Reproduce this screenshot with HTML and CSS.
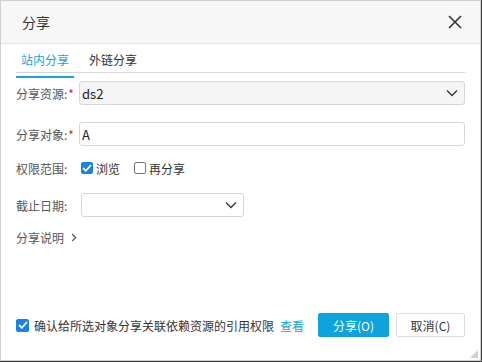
FILE: index.html
```html
<!DOCTYPE html>
<html lang="zh">
<head>
<meta charset="utf-8">
<link rel="stylesheet" href="styles.css">
</head>
<body>
<div class="dialog">
  <div class="header">
    <span class="title">分享</span>
    <svg class="close" width="14" height="14" viewBox="0 0 14 14"><path d="M1 1L13 13M13 1L1 13" stroke="#333" stroke-width="1.6" fill="none"/></svg>
  </div>
  <div class="body">
    <div class="tabs">
      <div class="tab active">站内分享</div>
      <div class="tab">外链分享</div>
    </div>
    <div class="row r1">
      <label class="lbl">分享资源:<span class="req">*</span></label>
      <div class="field select grey">
        <span class="val">ds2</span>
        <svg class="chev" width="12" height="8" viewBox="0 0 12 8"><path d="M1 1.5L6 6.5L11 1.5" stroke="#333" stroke-width="1.3" fill="none"/></svg>
      </div>
    </div>
    <div class="row r2">
      <label class="lbl">分享对象:<span class="req">*</span></label>
      <div class="field"><span class="val">A</span></div>
    </div>
    <div class="row r3">
      <label class="lbl">权限范围:</label>
      <span class="cb checked"><svg width="10" height="8" viewBox="0 0 10 8"><path d="M1 4L3.8 6.8L9 1" stroke="#fff" stroke-width="1.8" fill="none"/></svg></span>
      <span class="cbtext">浏览</span>
      <span class="cb second"></span>
      <span class="cbtext">再分享</span>
    </div>
    <div class="row r4">
      <label class="lbl">截止日期:</label>
      <div class="field select date">
        <svg class="chev" width="12" height="8" viewBox="0 0 12 8"><path d="M1 1.5L6 6.5L11 1.5" stroke="#333" stroke-width="1.3" fill="none"/></svg>
      </div>
    </div>
    <div class="row r5">
      <span class="lbl">分享说明</span>
      <svg class="arrow" width="6" height="9" viewBox="0 0 6 9"><path d="M1.2 1L4.8 4.5L1.2 8" stroke="#555" stroke-width="1.1" fill="none"/></svg>
    </div>
  </div>
  <div class="footer">
    <span class="cb checked"><svg width="10" height="8" viewBox="0 0 10 8"><path d="M1 4L3.8 6.8L9 1" stroke="#fff" stroke-width="1.8" fill="none"/></svg></span>
    <span class="confirm">确认给所选对象分享关联依赖资源的引用权限</span>
    <span class="link">查看</span>
    <span class="spacer"></span>
    <button class="btn primary">分享(O)</button>
    <button class="btn">取消(C)</button>
  </div>
  <div class="grip"></div>
</div>
</body>
</html>
```

FILE: styles.css
```css
* { box-sizing: border-box; }
html, body { margin: 0; padding: 0; }
body {
  width: 482px;
  height: 362px;
  background: #3a3a3a;
  font-family: "Noto Sans CJK SC", "Noto Sans", sans-serif;
  color: #333;
  font-size: 12px;
}
.dialog {
  position: relative;
  width: 481px;
  height: 361px;
  background: #fff;
  border: 1px solid #cfcfcf;
  display: flex;
  flex-direction: column;
}
.header {
  height: 43px;
  background: #f7f7f7;
  border-bottom: 1px solid #e6e6e6;
  display: flex;
  align-items: center;
  justify-content: space-between;
  padding: 0 18px 0 21px;
  flex: none;
}
.title { font-size: 14px; color: #333; }
.close { display: block; }
.body {
  padding: 0 15px;
  flex: 1;
}
.tabs {
  display: flex;
  height: 29px;
  border-bottom: 1px solid #d9d9d9;
  padding-top: 6px;
}
.tab {
  padding: 0 5px;
  height: 28px;
  line-height: 20px;
  font-size: 12px;
  color: #333;
  margin-right: 10px;
}
.tab.active {
  color: #14a5df;
  border-bottom: 2px solid #14a5df;
  margin-bottom: -1px;
}
.row {
  display: flex;
  align-items: center;
}
.lbl {
  width: 63px;
  color: #555;
  white-space: nowrap;
  font-size: 12px;
}
.req { color: #e02020; margin-left: 1px; }
.field {
  flex: 1;
  height: 24px;
  border: 1px solid #d6d6d6;
  border-radius: 3px;
  display: flex;
  align-items: center;
  padding: 0 4px 0 2px;
  background: #fff;
}
.field.grey { background: #f5f5f5; }
.val { font-size: 13px; color: #222; flex: 1; }
.select .chev { margin-left: auto; margin-right: 2px; }
.r1 { margin-top: 8px; }
.r2 { margin-top: 17px; }
.r3 { margin-top: 12px; height: 20px; }
.r4 { margin-top: 15px; }
.r4 .lbl { width: 65px; }
.field.date { flex: none; width: 163px; }
.r5 { margin-top: 9px; height: 22px; }
.r5 .lbl { width: auto; }
.arrow { margin-left: 7px; }
.r3 .lbl { width: 65px; }
.cb {
  width: 12px;
  height: 12px;
  border: 1px solid #777;
  border-radius: 2px;
  display: inline-flex;
  align-items: center;
  justify-content: center;
  background: #fff;
  flex: none;
}
.cb.checked { background: #1683e8; border-color: #1683e8; }
.cbtext { margin-left: 3px; color: #333; }
.cb.second { margin-left: 14px; }
.footer {
  display: flex;
  align-items: center;
  padding: 0 15px 0 15px;
  height: 56px;
  padding-bottom: 14px;
  flex: none;
}
.footer .cb { width: 13px; height: 13px; }
.confirm { margin-left: 5px; color: #333; }
.link { margin-left: 6px; color: #14a5df; }
.spacer { flex: 1; }
.btn {
  height: 24px;
  font-family: inherit;
  font-size: 12px;
  border: 1px solid #dcdcdc;
  background: #fff;
  color: #333;
  border-radius: 2px;
  width: 69px;
  margin-left: 7px;
  padding: 0;
}
.btn.primary {
  background: #0ea3dd;
  border-color: #0ea3dd;
  color: #fff;
  width: 71px;
}
.grip {
  position: absolute;
  right: 2px;
  bottom: 2px;
  width: 0;
  height: 0;
  border-left: 8px solid transparent;
  border-bottom: 8px solid #d0d0d0;
}
```
